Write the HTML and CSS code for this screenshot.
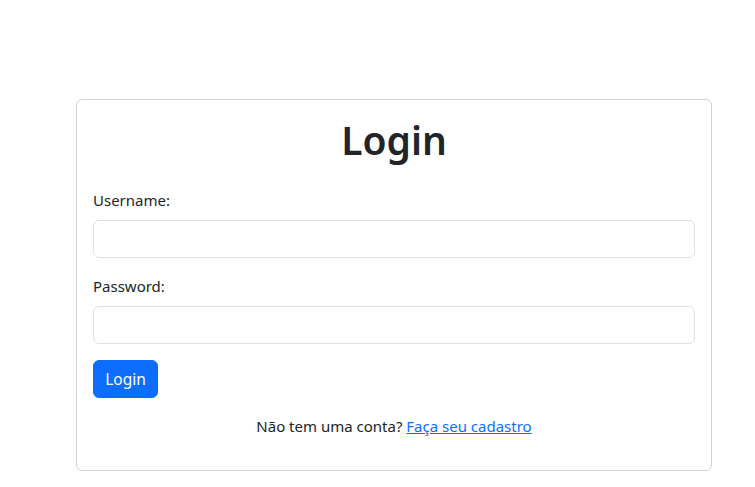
FILE: index.html
```html
<!DOCTYPE html>
<html lang="pt">
<head>
<meta charset="utf-8">
<title>Login</title>
<link rel="stylesheet" href="styles.css">
</head>
<body>
<div class="page">
  <div class="card">
    <h1 class="title">Login</h1>
    <form class="form">
      <div class="field">
        <label class="label" for="username">Username:</label>
        <input class="input" id="username" type="text">
      </div>
      <div class="field field-last">
        <label class="label" for="password">Password:</label>
        <input class="input" id="password" type="password">
      </div>
      <button class="btn" type="button">Login</button>
    </form>
    <p class="footer">Não tem uma conta? <a class="link" href="#">Faça seu cadastro</a></p>
  </div>
</div>
</body>
</html>
```

FILE: styles.css
```css
* { box-sizing: border-box; }
html, body { margin: 0; padding: 0; background: #fff; }
body {
  font-family: "Noto Sans", "Open Sans", sans-serif;
  font-size: 16px;
  line-height: 1.5;
  color: #212529;
}
.page {
  padding-top: 99px;
  padding-left: 76px;
}
.card {
  width: 636px;
  border: 1px solid rgba(0,0,0,.175);
  border-radius: 6px;
  padding: 16px 16px 16px;
}
.title {
  margin: 0 0 24px;
  font-size: 39px;
  line-height: 48px;
  font-weight: 600;
  text-align: center;
}
.form { margin: 0; }
.field { margin-bottom: 16px; }
.label {
  display: block;
  margin-bottom: 8px;
  font-size: 15px;
  line-height: 24px;
}
.input {
  display: block;
  width: 100%;
  height: 38px;
  border: 1px solid #dee2e6;
  border-radius: 6px;
  padding: 6px 12px;
  font: inherit;
  background: #fff;
}
.btn {
  display: block;
  height: 38px;
  width: 65px;
  border: 1px solid #0d6efd;
  background: #0d6efd;
  color: #fff;
  border-radius: 6px;
  padding: 0;
  font-family: inherit;
  font-size: 15.5px;
  line-height: 24px;
}
.footer {
  margin: 16px 0 16px;
  text-align: center;
  font-size: 15px;
  line-height: 24px;
}
.link { color: #0d6efd; text-decoration: underline; }
```
